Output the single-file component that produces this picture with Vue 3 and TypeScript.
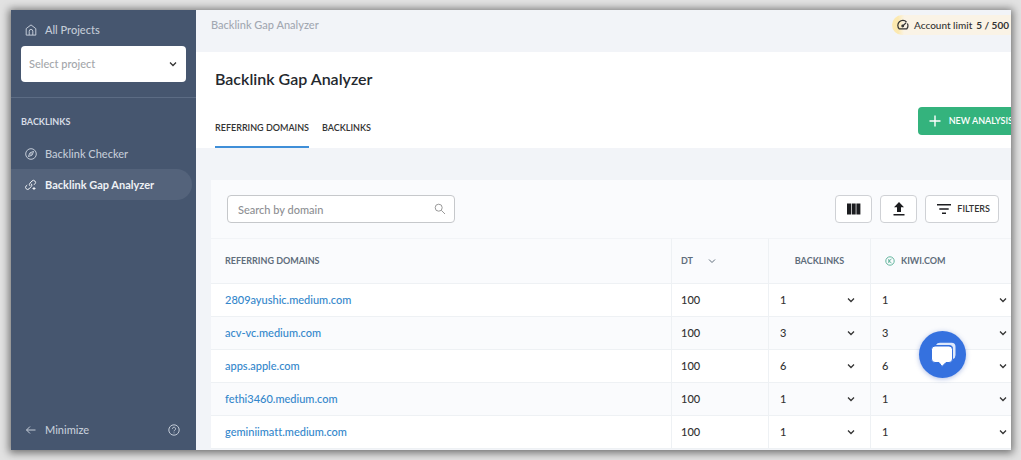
<script setup lang="ts">
import { ref } from 'vue'

interface Row {
  domain: string
  dt: number
  backlinks: number
  kiwi: number
}

const project = ref('')
const search = ref('')
const rows: Row[] = [
  { domain: '2809ayushic.medium.com', dt: 100, backlinks: 1, kiwi: 1 },
  { domain: 'acv-vc.medium.com', dt: 100, backlinks: 3, kiwi: 3 },
  { domain: 'apps.apple.com', dt: 100, backlinks: 6, kiwi: 6 },
  { domain: 'fethi3460.medium.com', dt: 100, backlinks: 1, kiwi: 1 },
  { domain: 'geminiimatt.medium.com', dt: 100, backlinks: 1, kiwi: 1 },
]
</script>

<template>
  <div class="stage">
    <div class="window">
      <aside class="sidebar">
        <a class="nav-item home" href="#">
          <svg class="icon" viewBox="0 0 12 12"><path d="M1.2 4.6 6 .9l4.8 3.7v6.5H1.2zM4.2 11V7.2a1.8 1.8 0 0 1 3.6 0V11" /></svg>
          <span>All Projects</span>
        </a>
        <div class="project">
          <select v-model="project" aria-label="Select project">
            <option value="">Select project</option>
          </select>
          <svg class="chevron" viewBox="0 0 8 8"><path d="m1 2.5 3 3 3-3" /></svg>
        </div>
        <nav class="nav">
          <h2>BACKLINKS</h2>
          <a class="nav-item" href="#">
            <svg class="icon" viewBox="0 0 12 12"><circle cx="6" cy="6" r="5.3" /><path d="M8.6 3.4 7.1 7.1 3.4 8.6l1.5-3.7z" /><circle cx="6" cy="6" r=".4" /></svg>
            <span>Backlink Checker</span>
          </a>
          <a class="nav-item active" href="#" aria-current="page">
            <svg class="icon" viewBox="0 0 12 12"><path d="M5 6.9a2 2 0 0 1 0-2.800L7 2a2 2 0 0 1 2.900 2.900L9 5.800M6.200 4.700a2 2 0 0 1 0 2.900L4.100 9.800A2 2 0 0 1 1.200 6.900L2.200 6M9 8v3M7.500 9.500h3" /></svg>
            <span>Backlink Gap Analyzer</span>
          </a>
        </nav>
        <footer class="side-foot">
          <button class="minimize" type="button">
            <svg class="icon" viewBox="0 0 12 12"><path d="M10.500 6h-9M5 2.500 1.500 6 5 9.500" /></svg>
            <span>Minimize</span>
          </button>
          <button type="button" aria-label="Help">
            <svg class="icon" viewBox="0 0 12 12"><circle cx="6" cy="6" r="5.200" /><path d="M4.400 4.800a1.600 1.600 0 1 1 2.500 1.300c-.6.4-.9.6-.9 1.200M6 8.500v.8" /></svg>
          </button>
        </footer>
      </aside>

      <main class="main">
        <header class="topbar">
          <span class="crumb">Backlink Gap Analyzer</span>
          <div class="limit">
            <svg class="gauge" viewBox="0 0 12 12"><path d="M9.500 3A5 5 0 0 0 2.200 9.900h7.600A5 5 0 0 0 10.400 4.600M5.500 7.200 9.200 3.600" /><circle cx="5.700" cy="7" r=".8" /></svg>
            <span>Account limit</span>
            <b>5 / 500</b>
          </div>
        </header>

        <section class="heading">
          <h1>Backlink Gap Analyzer</h1>
          <div class="tab-row">
            <nav class="tabs">
              <a class="tab current" href="#">REFERRING DOMAINS</a>
              <a class="tab" href="#">BACKLINKS</a>
            </nav>
            <button class="new" type="button">
              <svg viewBox="0 0 12 12"><path d="M6 .5v11M.5 6h11" /></svg>
              <span>NEW ANALYSIS</span>
            </button>
          </div>
        </section>

        <section class="card">
          <div class="toolbar">
            <div class="search">
              <input v-model="search" type="text" aria-label="Search by domain" placeholder="Search by domain" />
              <svg viewBox="0 0 12 12"><circle cx="4.700" cy="4.700" r="3.500" /><path d="m7.300 7.300 3.700 3.700" /></svg>
            </div>
            <div class="tools">
              <button class="tool square" type="button" aria-label="Columns">
                <svg class="glyph" viewBox="0 0 16 16"><path d="M1 2.500h4v11H1zM5.700 2.500h4v11h-4zM10.400 2.500h4v11h-4z" /></svg>
              </button>
              <button class="tool square" type="button" aria-label="Export">
                <svg class="glyph" viewBox="0 0 16 16"><path d="M8 1 3 6.300h3V11h4V6.300h3zM2.500 13h11v1.500h-11z" /></svg>
              </button>
              <button class="tool" type="button">
                <svg class="glyph" viewBox="0 0 16 16"><path d="M1 3h14v1.600H1zM3.300 7.200h9.400v1.600H3.300zM6 11.400h4V13H6z" /></svg>
                <span>FILTERS</span>
              </button>
            </div>
          </div>

          <table>
            <colgroup>
              <col />
              <col class="c-dt" />
              <col class="c-back" />
              <col class="c-kiwi" />
            </colgroup>
            <thead>
              <tr>
                <th>REFERRING DOMAINS</th>
                <th>
                  <button class="sort" type="button">
                    DT <svg class="chevron" viewBox="0 0 8 8"><path d="m1 2.500 3 3 3-3" /></svg>
                  </button>
                </th>
                <th class="center">BACKLINKS</th>
                <th>
                  <span class="site">
                    <svg viewBox="0 0 10 10"><circle cx="5" cy="5" r="4.200" /><path d="M3.800 3v4M6.500 3 4 5l2.500 2" /></svg>
                    KIWI.COM
                  </span>
                </th>
              </tr>
            </thead>
            <tbody>
              <tr v-for="row in rows" :key="row.domain">
                <td><a href="#">{{ row.domain }}</a></td>
                <td>{{ row.dt }}</td>
                <td>
                  <button class="expand" type="button">
                    {{ row.backlinks }}
                    <svg class="chevron" viewBox="0 0 8 8"><path d="m1 2.500 3 3 3-3" /></svg>
                  </button>
                </td>
                <td class="last">
                  <button class="expand" type="button">
                    {{ row.kiwi }}
                    <svg class="chevron" viewBox="0 0 8 8"><path d="m1 2.500 3 3 3-3" /></svg>
                  </button>
                </td>
              </tr>
            </tbody>
          </table>
        </section>

        <button class="chat" type="button" aria-label="Open chat">
          <svg viewBox="0 0 28 28">
            <path class="back" d="M7 4q1-2.200 4-2.200h11.500q4 0 4 4V14q0 3-2.500 4V8q0-4-4-4z" />
            <path class="front" d="M6 5h14q3.500 0 3.500 3.500V18q0 3.500-3.500 3.500h-3L13 25.500 10 21.500H6Q2.500 21.500 2.500 18V8.500Q2.500 5 6 5z" />
          </svg>
        </button>
      </main>
    </div>
  </div>
</template>

<style>
body {
  margin: 0;
}
</style>

<style scoped>
* {
  box-sizing: border-box;
}
.stage {
  height: 100vh;
  padding: 10px 10px 10px 11px;
  background: #e2e2e2;
  font-family: Lato, "Noto Sans", sans-serif;
  font-size: 11px;
  font-variant-ligatures: none;
  font-weight: 500;
  line-height: 16px;
  color: #333;
}
.window {
  display: flex;
  height: 100%;
  overflow: hidden;
  background: #f2f4f8;
  box-shadow: 0 1px 8px 2px rgba(0, 0, 0, 0.5);
}
button {
  display: flex;
  align-items: center;
  padding: 0;
  border: 0;
  background: none;
  font: inherit;
  color: inherit;
  cursor: pointer;
}
a {
  color: inherit;
  text-decoration: none;
}
svg {
  flex: none;
  fill: none;
  stroke: currentColor;
}
.icon {
  width: 12px;
  height: 12px;
}
.chevron {
  width: 8px;
  height: 8px;
  stroke-width: 1.3;
}
.sidebar {
  display: flex;
  flex: none;
  flex-direction: column;
  width: 185px;
  background: #46566f;
  color: #c3cbd7;
}
.nav-item {
  display: flex;
  align-items: center;
  gap: 8px;
  height: 31px;
  margin-right: 4px;
  padding-left: 14px;
}
.home {
  height: 36px;
  padding-top: 4px;
}
.project {
  display: grid;
  align-items: center;
  margin: 0 10px 15px;
}
.project select {
  grid-area: 1 / 1;
  width: 100%;
  height: 36px;
  padding: 0 8px;
  appearance: none;
  border: 0;
  border-radius: 4px;
  background: #fff;
  color: #a3a6aa;
  font: inherit;
}
.project .chevron {
  grid-area: 1 / 1;
  justify-self: end;
  margin-right: 9px;
  color: #333;
  pointer-events: none;
}
.nav {
  border-top: 1px solid #5c6c84;
}
.nav h2 {
  margin: 16px 10px 8px;
  font-size: 9px;
  line-height: 16px;
  font-weight: 700;
  color: #d6dce5;
}
.nav-item.active {
  border-radius: 0 16px 16px 0;
  background: #54637b;
  color: #eef1f5;
  font-weight: 700;
}
.side-foot {
  display: flex;
  justify-content: space-between;
  margin-top: auto;
  padding: 0 16px 12px 14px;
}
.minimize {
  gap: 8px;
}
.main {
  position: relative;
  display: flex;
  flex: 1;
  flex-direction: column;
  min-width: 0;
}
.topbar {
  display: flex;
  flex: none;
  justify-content: space-between;
  align-items: center;
  height: 42px;
  padding: 0 0 12px 15px;
}
.crumb {
  color: #a2a8b2;
}
.limit {
  display: flex;
  align-items: center;
  height: 20px;
  padding: 0 2px 0 5px;
  border-radius: 10px 0 0 10px;
  background: linear-gradient(90deg, #fce9b0 0 6px, #faf3e6 12px);
  font-size: 10px;
  white-space: nowrap;
}
.gauge {
  width: 12px;
  height: 12px;
  margin-right: 5px;
  stroke-width: 1.2;
}
.limit b {
  margin-left: 4px;
}
.heading {
  flex: none;
  background: #fff;
  padding: 15px 0 0 19px;
}
h1 {
  margin: 0 0 16px;
  font-size: 16px;
  line-height: 24px;
  font-weight: 600;
  color: #24282e;
}
.tab-row {
  display: flex;
  justify-content: space-between;
  height: 41px;
}
.tabs {
  display: flex;
  gap: 13px;
}
.tab {
  padding-top: 13px;
  font-size: 9px;
  font-weight: 600;
  white-space: nowrap;
}
.current {
  border-bottom: 2px solid #3f8fd8;
}
.new {
  height: 28px;
  gap: 8px;
  margin-right: -14px;
  padding: 0 12px 0 11px;
  border-radius: 4px;
  background: #34b37d;
  color: #fff;
  font-size: 9px;
  font-weight: 600;
  white-space: nowrap;
}
.new svg {
  width: 12px;
  height: 12px;
  stroke-width: 1.4;
}
.card {
  flex: none;
  margin: 32px 0 0 15px;
  background: #fafbfd;
}
.toolbar {
  display: flex;
  justify-content: space-between;
  align-items: center;
  height: 58px;
  padding: 0 12px 0 16px;
}
.search {
  display: grid;
  align-items: center;
  width: 228px;
}
.search input {
  grid-area: 1 / 1;
  width: 100%;
  height: 28px;
  padding: 0 10px;
  border: 1px solid #c6c8cb;
  border-radius: 4px;
  background: #fff;
  font: inherit;
}
.search input::placeholder {
  color: #8d8f93;
  opacity: 1;
}
.search svg {
  grid-area: 1 / 1;
  justify-self: end;
  width: 12px;
  height: 12px;
  margin-right: 9px;
  color: #999;
}
.tools {
  display: flex;
  gap: 8px;
}
.tool {
  justify-content: center;
  gap: 5px;
  height: 28px;
  padding: 0 8px 0 10px;
  border: 1px solid #cfd1d5;
  border-radius: 4px;
  background: #fff;
  font-size: 9px;
  font-weight: 600;
}
.square {
  width: 37px;
  padding: 0;
}
.glyph {
  width: 16px;
  height: 16px;
  fill: #1c1d20;
  stroke: none;
}
table {
  width: 100%;
  table-layout: fixed;
  border-collapse: separate;
  border-spacing: 0;
}
.c-dt {
  width: 97px;
}
.c-back {
  width: 102px;
}
.c-kiwi {
  width: 141px;
}
th,
td {
  padding: 0 15px 0 12px;
  border-bottom: 1px solid #eef1f4;
  text-align: left;
}
th:first-child,
td:first-child {
  padding-left: 14px;
}
th + th,
td + td {
  border-left: 1px solid #eef1f4;
  padding-left: 9px;
}
th + th + th,
td + td + td {
  padding-left: 11px;
}
th {
  height: 46px;
  border-top: 1px solid #f2f4f7;
  font-size: 9px;
  font-weight: 700;
  color: #5f6d7b;
}
th.center {
  text-align: center;
  padding: 0 14px;
}
td {
  height: 33px;
}
td.last {
  padding-right: 4px;
}
td a {
  color: #3487cb;
}
tbody tr:nth-child(odd) {
  background: #fff;
}
.sort {
  gap: 15px;
}
.sort .chevron {
  stroke-width: 1;
}
.site {
  display: flex;
  align-items: center;
  gap: 6px;
  padding-left: 3px;
}
.site svg {
  width: 10px;
  height: 10px;
  color: #62b59d;
}
.expand {
  justify-content: space-between;
  width: 100%;
}
.chat {
  position: absolute;
  right: 45px;
  bottom: 72px;
  justify-content: center;
  width: 47px;
  height: 47px;
  border-radius: 50%;
  background: #3571df;
  box-shadow: 0 1px 5px rgba(30, 70, 180, 0.35);
}
.chat svg {
  width: 28px;
  height: 28px;
  stroke: none;
}
.back {
  fill: #dfe9fb;
}
.front {
  fill: #fff;
  stroke: #3571df;
  stroke-width: 1;
}
</style>
